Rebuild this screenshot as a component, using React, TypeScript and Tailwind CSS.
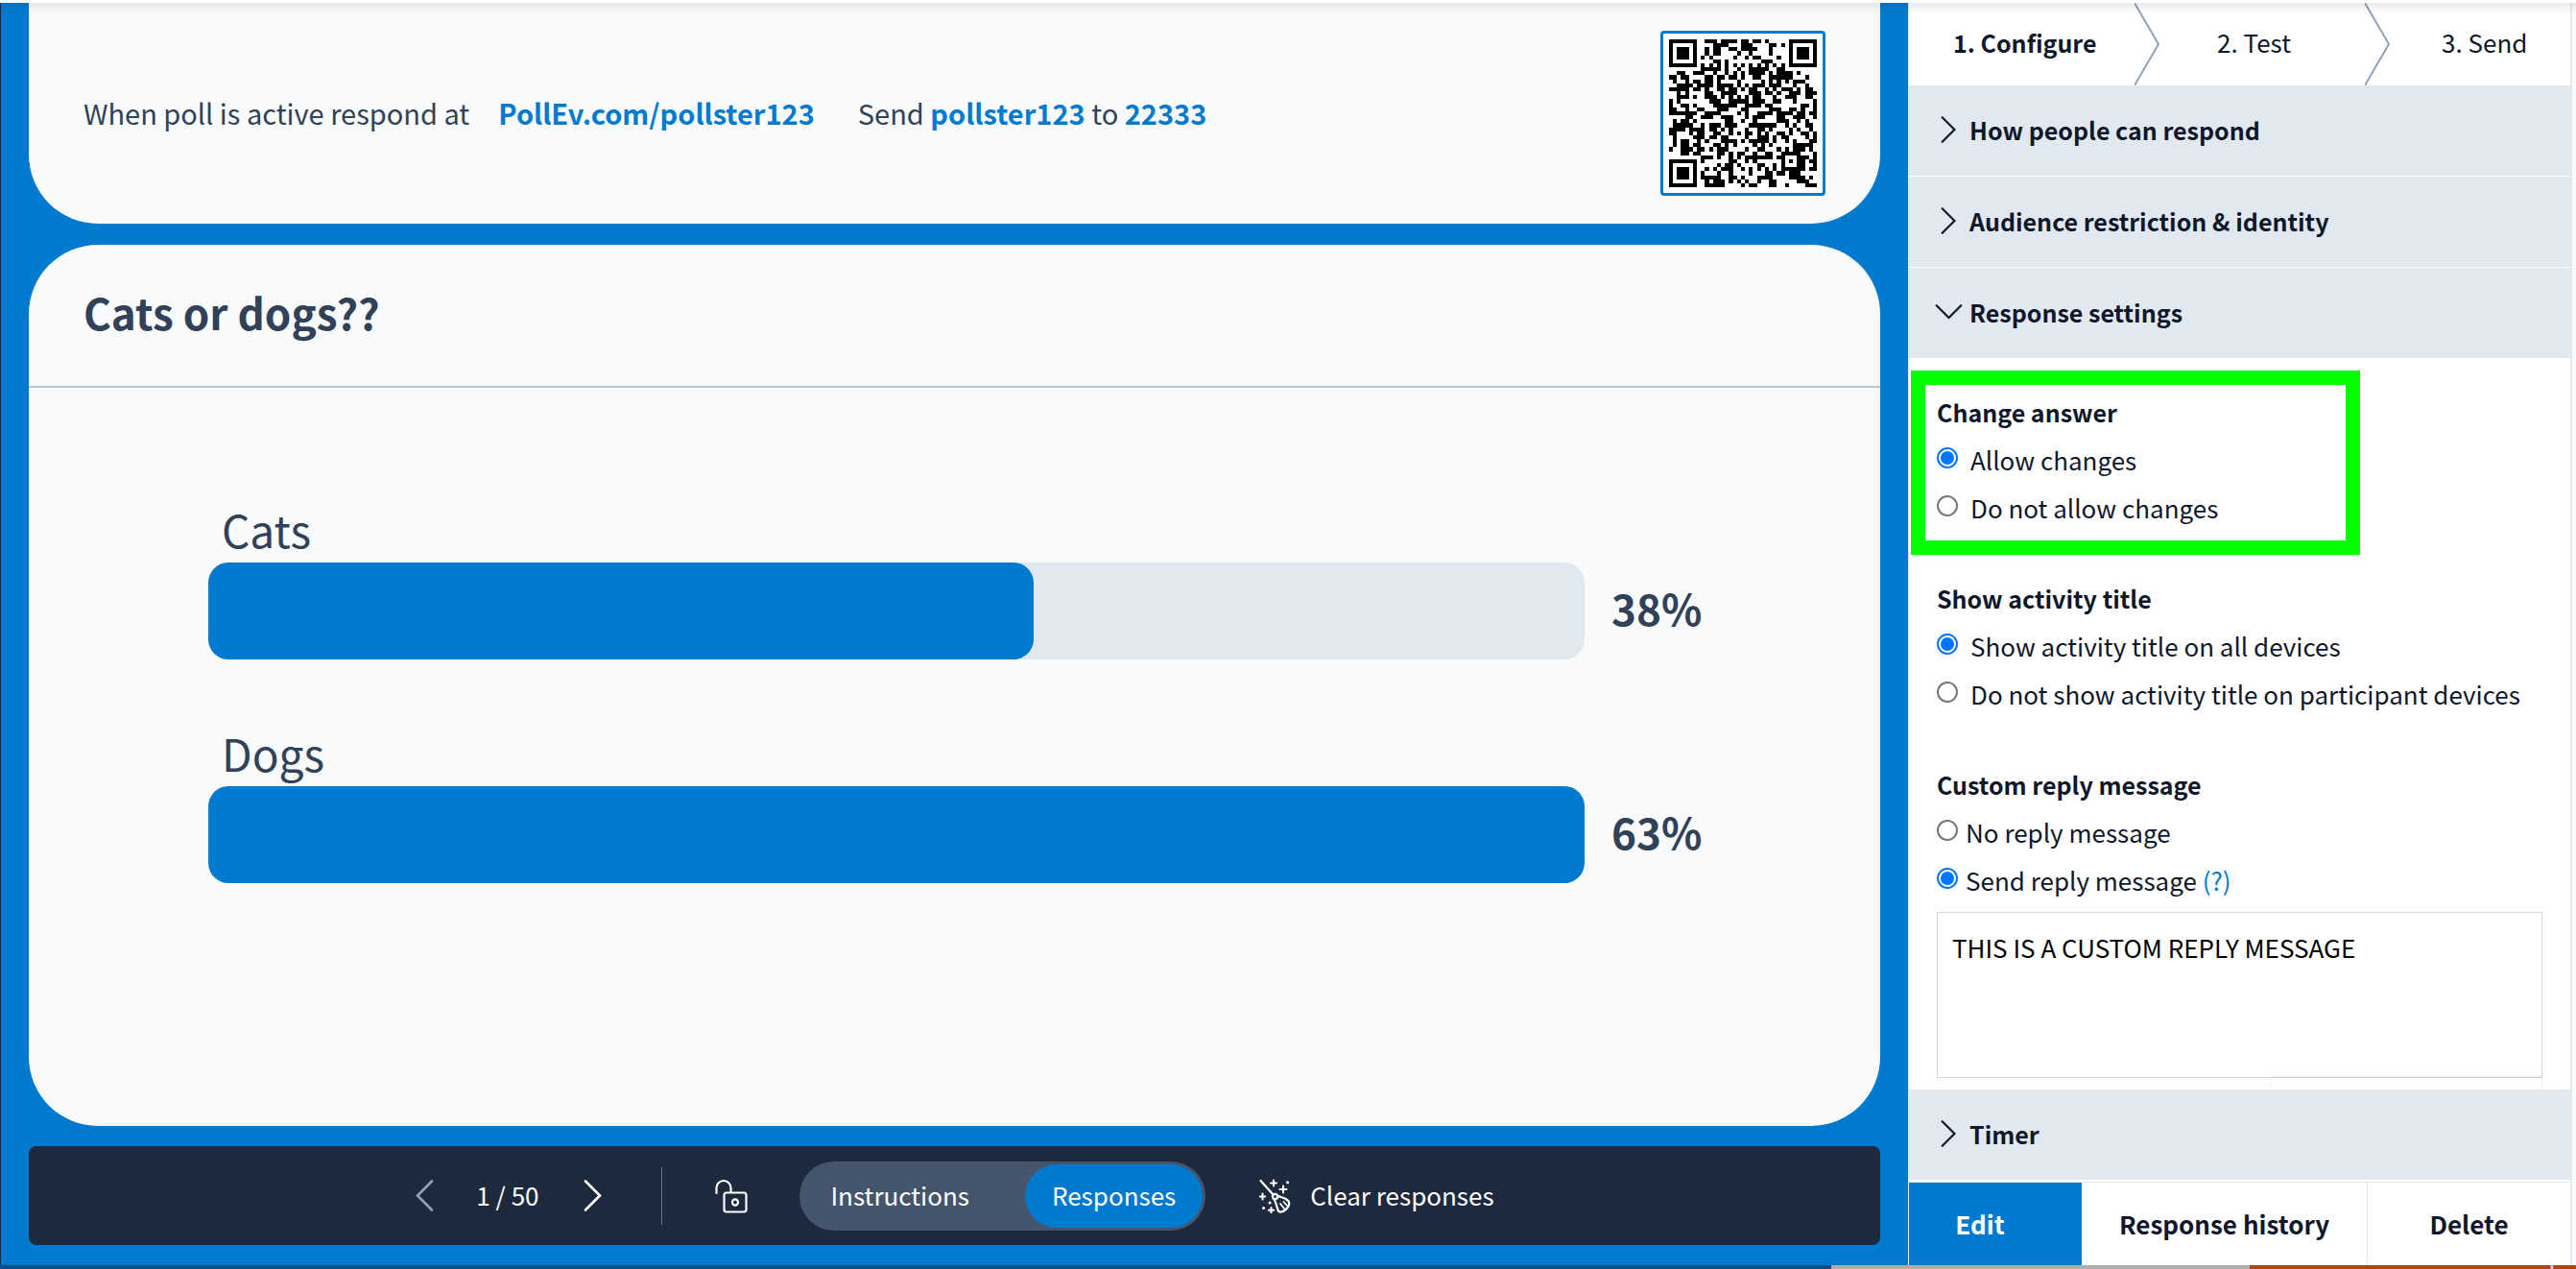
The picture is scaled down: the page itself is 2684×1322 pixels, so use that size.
import { useState } from "react";
import type { ReactNode } from "react";

const JOIN_URL = "https://PollEv.com/pollster123?qr=1";

const RESULTS = [
  { label: "Cats", percent: 38, fill: 60 },
  { label: "Dogs", percent: 63, fill: 100 },
];

/* ---------- QR code (version 5, level H, mask 3) ---------- */

const QR_SIZE = 37;
const QR_FORMAT = "001100111010000";
const QR_BLOCKS = [11, 11, 12, 12];
const QR_EC_LENGTH = 22;

function gfMultiply(a: number, b: number) {
  let z = 0;
  for (let i = 7; i >= 0; i--) {
    z = (z << 1) ^ ((z >>> 7) * 0x11d);
    z ^= ((b >>> i) & 1) * a;
  }
  return z;
}

function errorCorrection(data: number[]) {
  const divisor: number[] = new Array(QR_EC_LENGTH).fill(0);
  divisor[QR_EC_LENGTH - 1] = 1;
  let root = 1;
  for (let i = 0; i < QR_EC_LENGTH; i++) {
    for (let j = 0; j < QR_EC_LENGTH; j++) {
      divisor[j] = gfMultiply(divisor[j], root);
      if (j + 1 < QR_EC_LENGTH) divisor[j] ^= divisor[j + 1];
    }
    root = gfMultiply(root, 2);
  }
  const result: number[] = new Array(QR_EC_LENGTH).fill(0);
  for (const byte of data) {
    const factor = byte ^ (result.shift() as number);
    result.push(0);
    divisor.forEach((d, i) => (result[i] ^= gfMultiply(d, factor)));
  }
  return result;
}

function buildCodewords(text: string) {
  const toBits = (value: number) => value.toString(2).padStart(8, "0");
  let bits = "0100" + toBits(text.length);
  for (const ch of text) bits += toBits(ch.charCodeAt(0));
  bits += "0000";
  const data: number[] = [];
  for (let i = 0; i < bits.length; i += 8) data.push(parseInt(bits.slice(i, i + 8), 2));
  for (let pad = 0xec; data.length < 46; pad ^= 0xec ^ 0x11) data.push(pad);

  let offset = 0;
  const blocks = QR_BLOCKS.map((len) => {
    const block = data.slice(offset, offset + len);
    offset += len;
    return block;
  });
  const ec = blocks.map(errorCorrection);
  const out: number[] = [];
  for (let i = 0; i < 12; i++) blocks.forEach((b) => i < b.length && out.push(b[i]));
  for (let i = 0; i < QR_EC_LENGTH; i++) ec.forEach((e) => out.push(e[i]));
  return out.map(toBits).join("");
}

function buildQrPath(text: string) {
  const grid: (boolean | null)[][] = Array.from({ length: QR_SIZE }, () => new Array(QR_SIZE).fill(null));
  const set = (row: number, col: number, dark: boolean) => {
    if (row >= 0 && col >= 0 && row < QR_SIZE && col < QR_SIZE) grid[row][col] = dark;
  };

  // Timing, finder and alignment patterns
  for (let i = 0; i < QR_SIZE; i++) {
    set(6, i, i % 2 === 0);
    set(i, 6, i % 2 === 0);
  }
  for (const [r, c] of [[3, 3], [3, QR_SIZE - 4], [QR_SIZE - 4, 3]]) {
    for (let dy = -4; dy <= 4; dy++) {
      for (let dx = -4; dx <= 4; dx++) {
        const dist = Math.max(Math.abs(dx), Math.abs(dy));
        set(r + dy, c + dx, dist !== 2 && dist !== 4);
      }
    }
  }
  for (let dy = -2; dy <= 2; dy++) {
    for (let dx = -2; dx <= 2; dx++) {
      set(30 + dy, 30 + dx, Math.max(Math.abs(dx), Math.abs(dy)) !== 1);
    }
  }

  // Format bits, both copies
  const format = (i: number) => QR_FORMAT[14 - i] === "1";
  for (let i = 0; i <= 5; i++) set(i, 8, format(i));
  set(7, 8, format(6));
  set(8, 8, format(7));
  set(8, 7, format(8));
  for (let i = 9; i < 15; i++) set(8, 14 - i, format(i));
  for (let i = 0; i < 8; i++) set(8, QR_SIZE - 1 - i, format(i));
  for (let i = 8; i < 15; i++) set(QR_SIZE - 15 + i, 8, format(i));
  set(QR_SIZE - 8, 8, true);

  // Data, zigzag from the bottom right
  const bits = buildCodewords(text);
  let n = 0;
  let upward = true;
  for (let right = QR_SIZE - 1; right >= 1; right -= 2) {
    if (right === 6) right = 5;
    for (let step = 0; step < QR_SIZE; step++) {
      const row = upward ? QR_SIZE - 1 - step : step;
      for (const col of [right, right - 1]) {
        if (grid[row][col] !== null) continue;
        const dark = bits[n++] === "1";
        grid[row][col] = dark !== ((row + col) % 3 === 0);
      }
    }
    upward = !upward;
  }

  return grid
    .flatMap((cells, y) => cells.map((dark, x) => (dark ? `M${x} ${y}h1v1h-1z` : "")))
    .join("");
}

const QR_PATH = buildQrPath(JOIN_URL);

function QrCode() {
  return (
    <div className="rounded-sm border-3 border-[#007acf] bg-white p-1.5">
      <svg viewBox="0 0 37 37" className="size-[154px]" shapeRendering="crispEdges" role="img" aria-label="Join by QR code">
        <path d={QR_PATH} />
      </svg>
    </div>
  );
}

/* ---------- Icons ---------- */

function Chevron({ className = "" }: { className?: string }) {
  return (
    <svg viewBox="0 0 20 34" fill="none" stroke="currentColor" strokeLinecap="round" className={className}>
      <path d="M2 2l15 15L2 32" strokeWidth="2.6" />
    </svg>
  );
}

function UnlockIcon() {
  return (
    <svg viewBox="0 0 34 36" fill="none" stroke="currentColor" strokeWidth="2.2" strokeLinecap="round" className="h-9 w-[34px]">
      <path d="M1.5 15V9.5a7.5 7.5 0 0 1 15 0V14" />
      <rect x="9.5" y="14.5" width="23" height="20" rx="2.5" />
      <ellipse cx="21" cy="24.5" rx="3" ry="3.2" />
    </svg>
  );
}

function BroomIcon() {
  return (
    <svg viewBox="0 0 34 36" fill="none" stroke="currentColor" strokeWidth="2.2" strokeLinecap="round" strokeLinejoin="round" className="h-9 w-[34px]">
      <path d="M1.5 2L14.5 16.5" />
      <circle cx="16.5" cy="18.5" r="2.6" />
      <path d="M19 17.5c3 2 6 1.500 9.500 4c3 2 3.500 4 2 7c-1.500 3-4 5-7 6c-2.500 .5-4-1-4.500-3.500c-1-3-1.500-6.500-3.500-9.500" />
      <path d="M22 26l4 5M25.500 24l4 4.500" strokeWidth="1.800" />
      <path d="M15 1.500v6M12 4.500h6M25 7.500v7M21.500 11h7M3.500 15.500v6M.8 18.500h5.400M12.500 30v5.500M9.800 32.800h5.400" strokeWidth="2" />
      <path d="M29.500 3.800h.1M11 25h.1M4.500 30.500h.1" strokeWidth="3" />
    </svg>
  );
}

/* ---------- Sidebar ---------- */

function AccordionHeader({ open = false, children }: { open?: boolean; children: ReactNode }) {
  return (
    <button
      type="button"
      aria-expanded={open}
      className="flex h-[94px] w-full shrink-0 items-center bg-slate-200 pb-0.5 pl-[27px] text-left text-[25px] font-bold"
    >
      <span className="flex w-9 justify-start pl-1.5">
        {open ? <Chevron className="h-[30px] w-[17px] rotate-90" /> : <Chevron className="h-[30px] w-[17px]" />}
      </span>
      {children}
    </button>
  );
}

interface OptionGroupProps {
  title: string;
  name: string;
  options: { value: string; label: ReactNode }[];
  initial: string;
  labelGap: string;
}

function OptionGroup({ title, name, options, initial, labelGap }: OptionGroupProps) {
  const [selected, setSelected] = useState(initial);
  return (
    <fieldset className="leading-[50px]">
      <legend className="text-[25px] leading-[50px] font-bold">{title}</legend>
      {options.map((option) => (
        <label key={option.value} className={`flex ${labelGap}`}>
          <input
            type="radio"
            name={name}
            value={option.value}
            checked={selected === option.value}
            onChange={() => setSelected(option.value)}
            className="mt-3 size-[22px] shrink-0 appearance-none rounded-full border-2 border-[#767676] bg-white checked:border-[#0075ff] checked:bg-[#0075ff] checked:bg-clip-content checked:p-0.5"
          />
          <span>{option.label}</span>
        </label>
      ))}
    </fieldset>
  );
}

function StepDivider() {
  return (
    <svg viewBox="0 0 26 86" fill="none" className="h-full w-[26px] shrink-0 text-slate-400">
      <path d="M0 0l25 43L0 86" stroke="currentColor" strokeWidth="2" />
    </svg>
  );
}

function Sidebar() {
  return (
    <aside className="flex w-[696px] shrink-0 flex-col border-l border-slate-200 bg-slate-50">
      <div className="mr-1 flex flex-1 flex-col border-r-2 border-slate-200 bg-white">
        <nav className="flex h-[86px] items-center leading-[38px]">
          <a href="#configure" className="w-[235px] pb-1 pl-[46px] text-[25px] font-bold">1. Configure</a>
          <StepDivider />
          <a href="#test" className="w-[214px] pb-1 pl-[60px]">2. Test</a>
          <StepDivider />
          <a href="#send" className="pb-1 pl-[54px]">3. Send</a>
        </nav>

        <div className="flex flex-col gap-px">
          <AccordionHeader>How people can respond</AccordionHeader>
          <AccordionHeader>Audience restriction &amp; identity</AccordionHeader>
          <AccordionHeader open>Response settings</AccordionHeader>
        </div>

        <div className="flex flex-1 flex-col gap-11 px-[29px] pt-[31px]">
          <div className="relative">
            <OptionGroup
              title="Change answer"
              name="change"
              initial="allow"
              labelGap="gap-[13px]"
              options={[
                { value: "allow", label: "Allow changes" },
                { value: "deny", label: "Do not allow changes" },
              ]}
            />
            {/* Highlight drawn over the group */}
            <div className="pointer-events-none absolute -top-[18px] -left-[27px] h-[192px] w-[468px] border-[15px] border-[#00ff00]" />
          </div>
          <OptionGroup
            title="Show activity title"
            name="title"
            initial="show"
            labelGap="gap-[13px]"
            options={[
              { value: "show", label: "Show activity title on all devices" },
              { value: "hide", label: "Do not show activity title on participant devices" },
            ]}
          />
          <div>
            <OptionGroup
              title="Custom reply message"
              name="reply"
              initial="send"
              labelGap="gap-2"
              options={[
                { value: "none", label: "No reply message" },
                {
                  value: "send",
                  label: (
                    <>
                      Send reply message <a href="#help" className="text-[#007acf]">(?)</a>
                    </>
                  ),
                },
              ]}
            />
            <textarea
              aria-label="Custom reply message"
              defaultValue="THIS IS A CUSTOM REPLY MESSAGE"
              className="mt-2 block h-[173px] w-full resize-none border border-gray-300 px-[15px] py-4 leading-10 text-black"
            />
            <div className="ml-auto h-3 w-[283px] border-x border-slate-100 shadow-[0_-2px_2px_rgba(0,0,0,0.06)]" />
          </div>
        </div>

        <AccordionHeader>Timer</AccordionHeader>

        <div className="mt-0.5 flex h-[87px] border-t border-slate-200 font-bold">
          <button type="button" className="w-[180px] bg-[#007acf] pr-8 text-white">Edit</button>
          <button type="button" className="flex-1 border-r border-slate-200">Response history</button>
          <button type="button" className="w-[211px]">Delete</button>
        </div>
      </div>
    </aside>
  );
}

/* ---------- Presenter ---------- */

function JoinCard() {
  return (
    <section className="flex h-[230px] items-start justify-between rounded-b-[72px] bg-slate-50 px-[57px]">
      <div className="flex items-center pt-[94px] text-[29px] leading-[40px] text-slate-700">
        <span>When poll is active respond at</span>
        <a href={JOIN_URL} className="ml-[30px] font-bold text-[#007acf]">PollEv.com/pollster123</a>
        <span className="ml-[45px]">
          Send <b className="text-[#007acf]">pollster123</b> to <b className="text-[#007acf]">22333</b>
        </span>
      </div>
      <div className="pt-[29px]">
        <QrCode />
      </div>
    </section>
  );
}

function ResultsCard() {
  return (
    <section className="flex-1 rounded-[72px] bg-slate-50 text-slate-700">
      <h1 className="border-b-2 border-slate-400/60 px-[57px] pt-[40px] pb-[47px] text-[44px] leading-[60px] font-bold">Cats or dogs??</h1>
      <div className="flex flex-col gap-[72px] pt-[122px] pr-40 pl-[187px]">
        {RESULTS.map((result) => (
          <div key={result.label}>
            <div className="pb-2.5 pl-3.5 text-[46px] leading-[50px]">{result.label}</div>
            <div className="flex items-center">
              <div className="h-[101px] flex-1 rounded-[21px] bg-slate-200">
                <div className="h-full rounded-[21px] bg-[#007acf]" style={{ width: `${result.fill}%` }} />
              </div>
              <span className="w-[148px] pb-2 pl-7 text-[44px] leading-[60px] font-bold">{result.percent}%</span>
            </div>
          </div>
        ))}
      </div>
    </section>
  );
}

function Toolbar() {
  return (
    <div className="flex h-[103px] items-center justify-center rounded-lg bg-slate-800 text-white">
      <button type="button" aria-label="Previous" className="text-slate-400">
        <Chevron className="h-[35px] w-5 rotate-180" />
      </button>
      <span className="mr-[46px] ml-11 pb-0.5">1 / 50</span>
      <button type="button" aria-label="Next">
        <Chevron className="h-[35px] w-5" />
      </button>
      <div className="ml-[61px] h-[60px] w-px bg-slate-500" />
      <button type="button" aria-label="Unlock" className="ml-[55px]">
        <UnlockIcon />
      </button>
      <div className="ml-[54px] flex h-[72px] items-center rounded-full bg-slate-600 p-[3px]">
        <button type="button" className="pr-[58px] pb-0.5 pl-[30px]">Instructions</button>
        <button type="button" className="h-full rounded-full bg-[#007acf] px-7 pb-0.5">Responses</button>
      </div>
      <button type="button" className="ml-14 flex items-center gap-[19px]">
        <BroomIcon />
        <span className="pb-0.5">Clear responses</span>
      </button>
    </div>
  );
}

export default function App() {
  return (
    <div className="flex min-h-screen flex-col bg-white font-['Noto_Sans_CJK_SC','Noto_Sans',sans-serif] text-[26px] leading-[40px] text-slate-900">
      <div className="relative mt-[3px] flex flex-1">
        <main className="flex flex-1 flex-col border-l border-slate-800 bg-[#007acf] pr-[29px] pb-[21px] pl-[29px]">
          <JoinCard />
          <div className="mt-[22px] mb-[21px] flex flex-1 flex-col">
            <ResultsCard />
          </div>
          <Toolbar />
        </main>
        <Sidebar />
        <div className="pointer-events-none absolute inset-x-0 top-0 h-3 bg-gradient-to-b from-black/8 to-transparent" />
      </div>
      <footer className="flex h-[5px] overflow-hidden bg-[#0b4f86]">
        <div className="ml-auto w-[436px] bg-[#adadad]" />
        <div className="w-[340px] bg-[#a8481a] pr-2 text-right font-['Liberation_Sans'] text-[28px] leading-5 text-gray-300">renewals</div>
      </footer>
    </div>
  );
}
